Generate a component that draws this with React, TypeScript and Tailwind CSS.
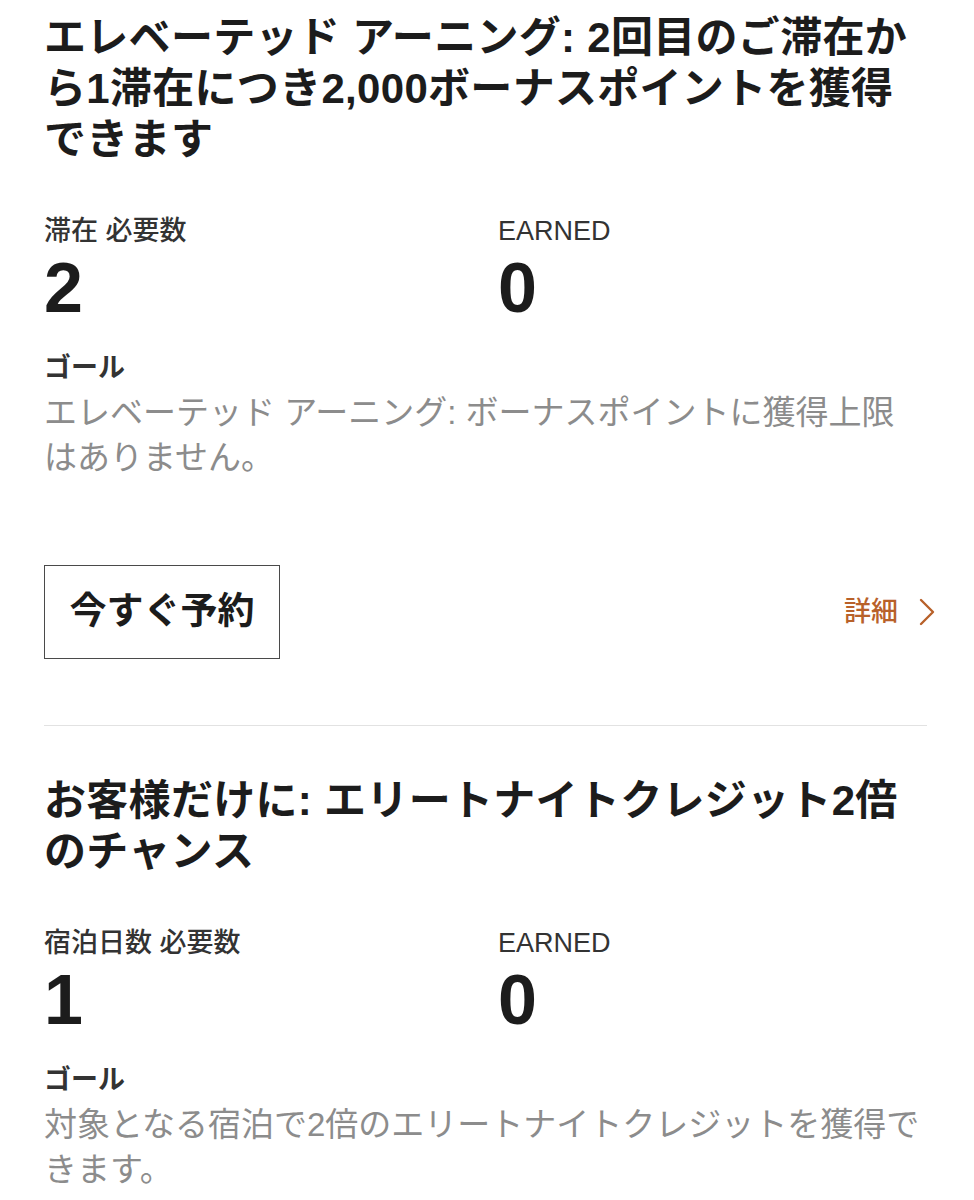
import { Fragment } from "react";

type Offer = {
  title: string[];
  label: string;
  required: number;
  earned: number;
  goal: string[];
  showActions?: boolean;
};

const offers: Offer[] = [
  {
    title: [
      "エレベーテッド アーニング: 2回目のご滞在か",
      "ら1滞在につき2,000ボーナスポイントを獲得",
      "できます",
    ],
    label: "滞在 必要数",
    required: 2,
    earned: 0,
    goal: ["エレベーテッド アーニング: ボーナスポイントに獲得上限", "はありません。"],
    showActions: true,
  },
  {
    title: ["お客様だけに: エリートナイトクレジット2倍", "のチャンス"],
    label: "宿泊日数 必要数",
    required: 1,
    earned: 0,
    goal: ["対象となる宿泊で2倍のエリートナイトクレジットを獲得で", "きます。"],
  },
];

// the source wraps per line; keep the same breaks
function Lines({ lines }: { lines: string[] }) {
  return (
    <>
      {lines.map((l, i) => (
        <span key={i} className="block whitespace-pre">
          {l}
        </span>
      ))}
    </>
  );
}

function OfferCard({ offer }: { offer: Offer }) {
  return (
    <section>
      <h2 className="text-[42px] leading-[51px] font-bold text-[#1c1c1c] tracking-[0.3px]">
        <Lines lines={offer.title} />
      </h2>

      <div className="mt-[50px] grid grid-cols-[454px_1fr]">
        <div>
          <p className="text-[27px] leading-[32px] font-medium text-[#333]">{offer.label}</p>
          <p className="mt-[13px] text-[70px] leading-[56px] font-bold text-[#1c1c1c]">
            {offer.required}
          </p>
        </div>
        <div>
          <p className="text-[27px] leading-[32px] font-medium text-[#333]">EARNED</p>
          <p className="mt-[13px] text-[70px] leading-[56px] font-bold text-[#1c1c1c]">
            {offer.earned}
          </p>
        </div>
      </div>

      <p className="mt-[35px] text-[27px] leading-[34px] font-bold text-[#333]">ゴール</p>
      <p className="mt-[5px] text-[33px] leading-[45px] text-[#8c8c8c]">
        <Lines lines={offer.goal} />
      </p>

      {offer.showActions && (
        <div className="mt-[85px] flex items-center justify-between">
          <button
            type="button"
            className="w-[236px] h-[94px] border border-[#4a4a4a] text-[37px] font-bold text-[#1c1c1c] bg-white"
          >
            今すぐ予約
          </button>
          <a className="flex items-center gap-[20px] text-[27px] font-medium text-[#b8612a]">
            詳細
            <svg width="18" height="30" viewBox="0 0 18 30" fill="none">
              <polyline
                points="3,3 15,15 3,27"
                stroke="#b8612a"
                strokeWidth="2.4"
                strokeLinecap="round"
                strokeLinejoin="round"
              />
            </svg>
          </a>
        </div>
      )}
    </section>
  );
}

export default function App() {
  return (
    <div
      className="w-[974px] min-h-[1200px] bg-white pl-[44px] pr-[38px] pt-[12px]"
      style={{ fontFamily: '"Liberation Sans", "Noto Sans CJK JP", sans-serif' }}
    >
      {offers.map((o, i) => (
        <Fragment key={i}>
          {i > 0 && (
            <hr className="mt-[66px] mb-[49px] mr-[9px] border-0 border-t border-[#e2e2e2]" />
          )}
          <OfferCard offer={o} />
        </Fragment>
      ))}
    </div>
  );
}
